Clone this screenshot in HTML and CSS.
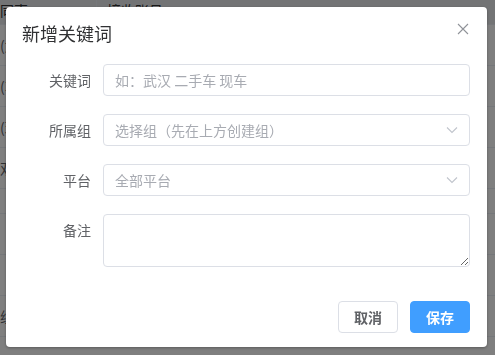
FILE: index.html
```html
<!DOCTYPE html>
<html lang="zh">
<head>
  <meta charset="UTF-8" />
  <meta name="viewport" content="width=device-width, initial-scale=1.0"/>
  <title>新增关键词</title>
  <link rel="stylesheet" href="styles.css">
</head>
<body>
  <!-- page behind the dialog -->
  <div class="page">
    <div class="tbl-head">
      <div class="col-a">同声</div>
      <div class="col-b">接收账号</div>
    </div>
    <div class="tbl-row"><div class="col-a">(武汉)</div><div class="col-b"></div></div>
    <div class="tbl-row"><div class="col-a">(车)</div><div class="col-b"></div></div>
    <div class="tbl-row"><div class="col-a">(现)</div><div class="col-b"></div></div>
    <div class="tbl-row"><div class="col-a">双</div><div class="col-b"></div></div>
    <div class="tbl-row short"><div class="col-a"></div><div class="col-b"></div></div>
    <div class="tbl-row"><div class="col-a"></div><div class="col-b"></div></div>
    <div class="tbl-row"><div class="col-a"></div><div class="col-b"></div></div>
    <div class="tbl-row"><div class="col-a">组</div><div class="col-b"></div></div>
  </div>

  <div class="overlay">
    <div class="dialog">
      <div class="dialog-header">
        <span class="dialog-title">新增关键词</span>
        <span class="close-btn">
          <svg width="12" height="12" viewBox="0 0 12 12"><path d="M1 1 L11 11 M11 1 L1 11" stroke="#909399" stroke-width="1.1" fill="none"/></svg>
        </span>
      </div>
      <div class="dialog-body">
        <div class="form-item">
          <label class="form-label">关键词</label>
          <div class="field"><input class="text-input" type="text" placeholder="如：武汉 二手车 现车"></div>
        </div>
        <div class="form-item">
          <label class="form-label">所属组</label>
          <div class="field select">
            <span class="placeholder">选择组（先在上方创建组）</span>
            <svg class="arrow" width="12" height="8" viewBox="0 0 12 8"><path d="M1 1.5 L6 6.5 L11 1.5" stroke="#c0c4cc" stroke-width="1.1" fill="none"/></svg>
          </div>
        </div>
        <div class="form-item">
          <label class="form-label">平台</label>
          <div class="field select">
            <span class="placeholder">全部平台</span>
            <svg class="arrow" width="12" height="8" viewBox="0 0 12 8"><path d="M1 1.5 L6 6.5 L11 1.5" stroke="#c0c4cc" stroke-width="1.1" fill="none"/></svg>
          </div>
        </div>
        <div class="form-item">
          <label class="form-label">备注</label>
          <div class="field area"><textarea class="text-area"></textarea></div>
        </div>
      </div>
      <div class="dialog-footer">
        <button class="btn">取消</button>
        <button class="btn primary">保存</button>
      </div>
    </div>
  </div>
</body>
</html>
```

FILE: styles.css
```css
body {
  margin: 0;
  font-family: "Noto Sans CJK SC", "Liberation Sans", sans-serif;
  background: #fff;
  overflow: hidden;
  width: 495px;
  height: 355px;
}
.page {
  width: 495px;
  height: 355px;
  font-size: 14px;
  color: #606266;
}
.tbl-head, .tbl-row {
  display: flex;
  border-bottom: 1px solid #ebeef5;
}
.tbl-head {
  height: 24px;
  background: #e6e8eb;
  color: #303133;
  align-items: flex-start;
}
.tbl-row {
  height: 40px;
  align-items: center;
}
.tbl-row.short { height: 24px; }
.col-a {
  width: 96px;
  white-space: nowrap;
  overflow: hidden;
}
.col-b {
  flex: 1;
  padding-left: 10px;
  border-left: 1px solid #ebeef5;
  height: 100%;
  display: flex;
  align-items: flex-start;
}
.overlay {
  position: fixed;
  inset: 0;
  background: rgba(0, 0, 0, 0.5);
}
.dialog {
  position: absolute;
  left: 6px;
  top: 7px;
  width: 481px;
  height: 340px;
  background: #fff;
  border-radius: 4px;
  box-shadow: 0 1px 3px rgba(0, 0, 0, 0.3);
  box-sizing: border-box;
}
.dialog-header {
  display: flex;
  justify-content: space-between;
  align-items: flex-start;
  padding: 14px 18px 0 16px;
  height: 41px;
  box-sizing: border-box;
}
.dialog-title {
  font-size: 18px;
  line-height: 24px;
  color: #303133;
}
.close-btn {
  display: flex;
  padding-top: 2px;
}
.dialog-body {
  padding: 16px 17px 0 20px;
}
.form-item {
  display: flex;
  margin-bottom: 18px;
}
.form-label {
  width: 65px;
  padding-right: 12px;
  text-align: right;
  font-size: 14px;
  line-height: 32px;
  color: #606266;
  flex-shrink: 0;
}
.field {
  flex: 1;
  height: 32px;
  border: 1px solid #dcdfe6;
  border-radius: 4px;
  box-sizing: border-box;
  display: flex;
  align-items: center;
}
.text-input {
  border: none;
  outline: none;
  width: 100%;
  padding: 0 11px;
  font-family: inherit;
  font-size: 14px;
  color: #606266;
  background: transparent;
}
.text-input::placeholder { color: #a8abb2; }
.select {
  justify-content: space-between;
  padding: 0 11px;
}
.placeholder {
  font-size: 14px;
  color: #a8abb2;
}
.area {
  height: 53px;
  border: none;
}
.text-area {
  width: 100%;
  height: 53px;
  box-sizing: border-box;
  border: 1px solid #dcdfe6;
  border-radius: 4px;
  resize: vertical;
  font-family: inherit;
  outline: none;
}
.dialog-footer {
  display: flex;
  justify-content: flex-end;
  gap: 12px;
  padding: 16px 17px 0 0;
}
.btn {
  height: 32px;
  padding: 0 15px;
  font-family: inherit;
  font-size: 14px;
  font-weight: 600;
  border: 1px solid #dcdfe6;
  border-radius: 4px;
  background: #fff;
  color: #606266;
}
.btn.primary {
  background: #409eff;
  border-color: #409eff;
  color: #fff;
}
```
